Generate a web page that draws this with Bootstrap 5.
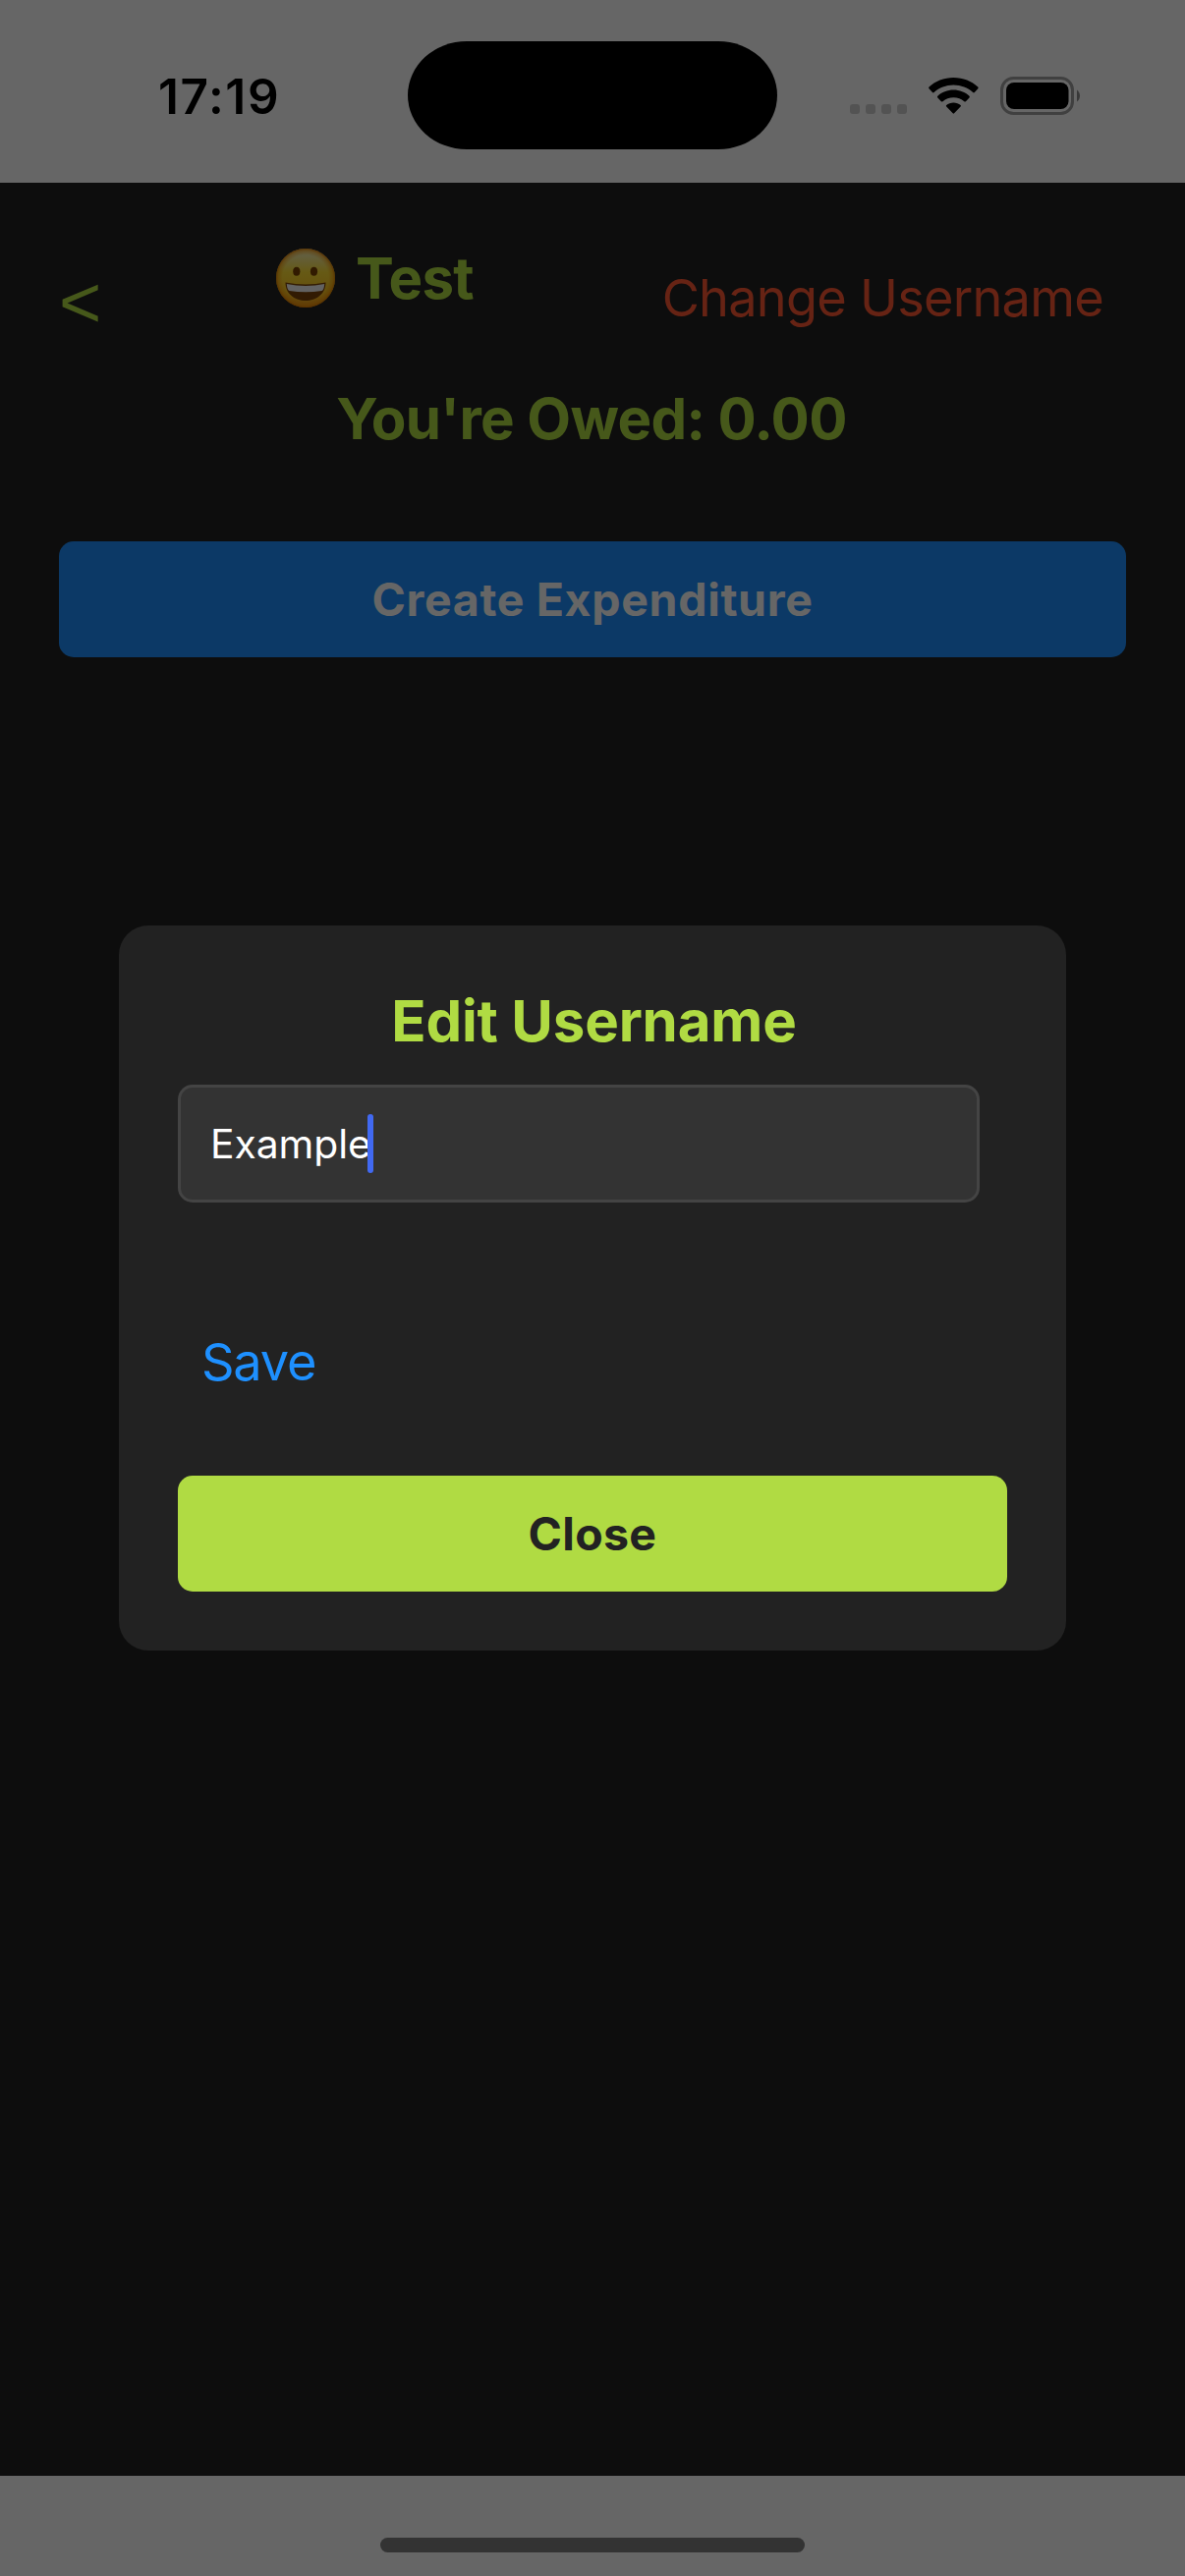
<!DOCTYPE html>
<html lang="en">
<head>
<meta charset="utf-8">
<meta name="viewport" content="width=device-width, initial-scale=1">
<title>Edit Username</title>
<link href="https://cdn.jsdelivr.net/npm/bootstrap@5.3.0/dist/css/bootstrap.min.css" rel="stylesheet">
<style>
  :root { --lime: #b0db43; --panel: #222; }
  body { font-family: Inter, "Liberation Sans", sans-serif; background: #fff; overflow: hidden; }
  .screen { height: 2622px; }

  /* system status bar */
  .status-bar { height: 186px; padding: 42px 106px 0 161px; }
  .clock { width: 254px; line-height: 110px; margin-top: 1px; font-size: 49.5px; font-weight: 600; letter-spacing: 1.6px; color: #000; }
  .island { width: 376px; height: 110px; border-radius: 60px / 55px; background: #000; }
  .status-icons { margin-top: 36px; height: 39px; }

  /* app page */
  .app-page { background: var(--panel); padding: 0 60px; }
  .head-row { height: 203px; padding-top: 61px; line-height: 72px; }
  .back-btn { font: 74px/72px "Liberation Sans", sans-serif; color: var(--lime); margin-top: 25px; width: 43px; }
  .group-title { margin-left: 178px; gap: 21px; font-size: 58.2px; letter-spacing: -.75px; color: var(--lime); }
  .group-title svg { margin-top: -1px; }
  .rename-btn { font-size: 52.3px; line-height: 72px; letter-spacing: -.76px; color: #ff5733; margin: 20px 23px 0 auto; }
  .owed { font-size: 58.2px; line-height: 74px; letter-spacing: -.63px; color: var(--lime); margin-bottom: 88px; padding-right: 2px; }
  .wide-btn { height: 118px; padding: 1px 0 0; border: 0; border-radius: 15px; font-size: 46.5px; font-weight: 700; }
  .create-btn, .create-btn:hover { background: #1e90ff; color: #fff; letter-spacing: .66px; }

  .home-zone { height: 102px; padding-top: 63px; }
  .home-pill { width: 432px; height: 15px; border-radius: 8px; background: #7f7f7f; }

  /* dialog */
  .dim { background: rgba(0, 0, 0, .6); }
  .dim .modal-dialog { max-width: 964px; margin-top: 0; margin-bottom: 0; min-height: 2622px; }
  .dim .modal-content { height: 738px; padding: 60px; border: 0; border-radius: 30px; background: var(--panel); }
  .dialog-title { font-size: 58.2px; line-height: 74px; letter-spacing: -.16px; margin-bottom: 28px; color: var(--lime); padding-left: 3px; }
  .name-field { width: 816px; height: 120px; padding: 0 0 0 30px; border: 3px solid #444; border-radius: 15px; background: #333; color: #fff; font-size: 40.8px; letter-spacing: -.05px; }
  .name-field span:first-child { padding-top: 1px; }
  .caret { width: 6px; height: 60px; margin-left: -4px; border-radius: 3px; background: #4169f1; }
  .save-btn { font-size: 52.3px; line-height: 72px; letter-spacing: -1.2px; color: #1e90ff; margin: 126px 0 80px 24px; }
  .close-btn, .close-btn:hover { background: var(--lime); color: #222; letter-spacing: .3px; }
</style>
</head>
<body>
<div class="screen d-flex flex-column">

  <header class="status-bar d-flex align-items-start">
    <div class="clock">17:19</div>
    <div class="island"></div>
    <svg class="status-icons ms-auto" width="235" height="39" viewBox="865 78 235 39">
      <g fill="#d0d0d0">
        <rect x="865" y="106" width="10" height="10" rx="3"/><rect x="881" y="106" width="10" height="10" rx="3"/>
        <rect x="897" y="106" width="10" height="10" rx="3"/><rect x="913" y="106" width="10" height="10" rx="3"/>
      </g>
      <g fill="#000">
        <path d="M970.4 79C980.3 79 989 82.6 995.3 88.6Q996.1 89.4 995.3 90.2L991.8 94Q991 94.8 990.2 94C985 89.400 978 86.600 970.400 86.600S955.800 89.400 950.600 94Q949.800 94.800 949 94L945.500 90.200Q944.700 89.400 945.500 88.600C951.800 82.600 960.500 79 970.400 79Z"/>
        <path d="M970.4 91.600C976.600 91.600 982.200 93.900 986.500 97.800Q987.300 98.600 986.500 99.400L982.900 103.200Q982.100 104 981.300 103.200C978.400 100.700 974.600 99.200 970.400 99.200S962.400 100.700 959.500 103.200Q958.700 104 957.900 103.200L954.300 99.400Q953.500 98.600 954.300 97.800C958.600 93.900 964.200 91.600 970.400 91.600Z"/>
        <path d="M970.400 104.400C973.200 104.400 975.700 105.400 977.600 107Q978.400 107.800 977.600 108.600L971.100 115.300Q970.400 116 969.700 115.300L963.200 108.600Q962.400 107.800 963.200 107C965.100 105.400 967.600 104.400 970.400 104.400Z"/>
        <rect x="1024" y="84" width="63.500" height="27" rx="8"/>
      </g>
      <rect x="1019.500" y="79.500" width="72" height="36" rx="12" fill="none" stroke="#a0a0a0" stroke-width="3"/>
      <path d="M1096 91.500A7.500 7.500 0 0 1 1096 103.500Z" fill="#8c8c8c"/>
    </svg>
  </header>

  <main class="app-page flex-grow-1">
    <div class="head-row d-flex align-items-start">
      <div class="back-btn">&lt;</div>
      <div class="group-title d-flex align-items-center fw-bold">
        <svg width="60" height="60" viewBox="0 0 60 60" role="img" aria-label="grinning face">
          <defs>
            <linearGradient id="skin" x1="0" y1="0" x2="0" y2="1">
              <stop offset="0" stop-color="#fff0a0"/><stop offset=".12" stop-color="#f6ec9c"/>
              <stop offset=".4" stop-color="#ffe034"/><stop offset=".75" stop-color="#ffc61f"/><stop offset="1" stop-color="#f39a18"/>
            </linearGradient>
            <radialGradient id="rim" cx=".5" cy=".5" r=".5">
              <stop offset=".78" stop-color="#f08c00" stop-opacity="0"/><stop offset=".93" stop-color="#f08c00" stop-opacity=".5"/><stop offset="1" stop-color="#dc7800" stop-opacity=".95"/>
            </radialGradient>
          </defs>
          <circle cx="30" cy="30" r="30" fill="url(#skin)"/>
          <circle cx="30" cy="30" r="30" fill="url(#rim)"/>
          <ellipse cx="20.800" cy="23.200" rx="3.600" ry="4.500" fill="#7a4300"/>
          <ellipse cx="38.500" cy="23.200" rx="3.600" ry="4.500" fill="#7a4300"/>
          <path d="M9.500 34.500Q30 38.500 50.500 34.500C50.500 46 41 53 30 53S9.500 46 9.500 34.500Z" fill="#7d4508"/>
          <path d="M10.800 36Q30 39.800 49.200 36Q48.800 42 46.500 43Q30 45.500 13.500 43Q11.200 42 10.800 36Z" fill="#f4f4f4"/>
        </svg>
        <span>Test</span>
      </div>
      <div class="rename-btn">Change Username</div>
    </div>
    <div class="owed fw-bold text-center">You're Owed: 0.00</div>
    <button type="button" class="btn wide-btn create-btn w-100 d-block">Create Expenditure</button>
  </main>

  <footer class="home-zone"><div class="home-pill mx-auto"></div></footer>
</div>

<div class="modal show d-block dim overflow-hidden" tabindex="-1">
  <div class="modal-dialog modal-dialog-centered">
    <div class="modal-content">
      <div class="dialog-title fw-bold text-center">Edit Username</div>
      <div class="name-field d-flex align-items-center"><span>Example</span><span class="caret"></span></div>
      <div class="save-btn">Save</div>
      <button type="button" class="btn wide-btn close-btn w-100">Close</button>
    </div>
  </div>
</div>
<script src="https://cdn.jsdelivr.net/npm/bootstrap@5.3.0/dist/js/bootstrap.bundle.min.js"></script>
</body>
</html>
